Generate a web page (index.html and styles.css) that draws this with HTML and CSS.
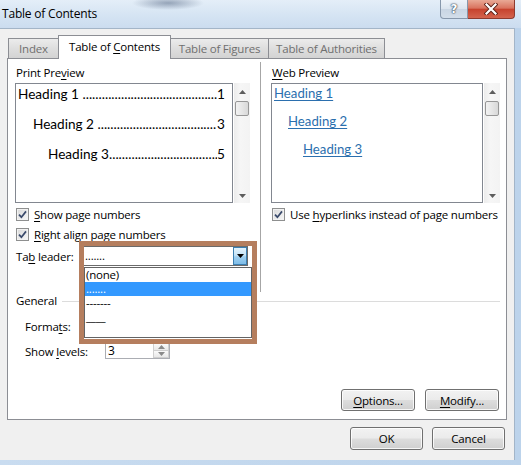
FILE: index.html
```html
<!DOCTYPE html>
<html lang="en">
<head>
<meta charset="utf-8">
<title>Table of Contents</title>
<link rel="stylesheet" href="styles.css">
</head>
<body>
<div class="window">
  <header class="titlebar">
    <span class="title">Table of Contents</span>
    <div class="caption-buttons">
      <span class="cap-btn help">?</span>
      <span class="cap-btn close">
        <svg viewBox="0 0 14 12" width="14" height="12"><path d="M2.5 1.5 11.5 10.5M11.5 1.5 2.5 10.5" stroke="#5a1f16" stroke-width="4" stroke-linecap="square"/><path d="M2.5 1.5 11.5 10.5M11.5 1.5 2.5 10.5" stroke="#fff" stroke-width="2.2" stroke-linecap="square"/></svg>
      </span>
    </div>
  </header>

  <div class="client">
    <nav class="tabs">
      <span class="tab t-index"><span>Index</span></span>
      <span class="tab active t-toc"><span>Table of <u>C</u>ontents</span></span>
      <span class="tab t-fig"><span>Table of Figures</span></span>
      <span class="tab t-auth"><span>Table of Authorities</span></span>
    </nav>

    <section class="panel">
      <div class="previews">
        <div class="pane pane-print">
          <div class="caption">Print Pre<u>v</u>iew</div>
          <div class="preview-box print-box">
            <div class="preview">
              <div class="toc-line lvl1"><span class="entry">Heading 1&nbsp;</span><span class="leader">..........................................</span><span class="num">1</span></div>
              <div class="toc-line lvl2"><span class="entry">Heading 2&nbsp;</span><span class="leader">.....................................</span><span class="num">3</span></div>
              <div class="toc-line lvl3"><span class="entry">Heading 3</span><span class="leader">..................................</span><span class="num">5</span></div>
            </div>
            <div class="vscroll">
              <svg class="arrow up" viewBox="0 0 7 4" width="7" height="4"><path d="M0 4 3.5 0 7 4Z" fill="#5d5d5d"/></svg>
              <span class="thumb"></span>
              <svg class="arrow down" viewBox="0 0 7 4" width="7" height="4"><path d="M0 0 3.5 4 7 0Z" fill="#5d5d5d"/></svg>
            </div>
          </div>
          <label class="check first">
            <span class="cb"><svg viewBox="0 0 9 9" width="9" height="9"><path d="M1 4.6 3.4 7.2 8 1.4" fill="none" stroke="#3a4a6b" stroke-width="1.7"/></svg></span>
            <span><u>S</u>how page numbers</span>
          </label>
          <label class="check">
            <span class="cb"><svg viewBox="0 0 9 9" width="9" height="9"><path d="M1 4.6 3.4 7.2 8 1.4" fill="none" stroke="#3a4a6b" stroke-width="1.7"/></svg></span>
            <span><u>R</u>ight align page numbers</span>
          </label>
          <div class="field leader-field">
            <span class="field-label short">Ta<u>b</u> leader:</span>
            <div class="combo">
              <span class="combo-value">.......</span>
              <span class="combo-arrow">
                <svg viewBox="0 0 7 4" width="7" height="4"><path d="M0 0 3.5 4 7 0Z" fill="#000"/></svg>
              </span>
              <ul class="dropdown">
                <li>(none)</li>
                <li class="selected">.......</li>
                <li>-------</li>
                <li>____</li>
              </ul>
              <span class="callout"></span>
            </div>
          </div>
        </div>

        <div class="divider"></div>

        <div class="pane pane-web">
          <div class="caption"><u>W</u>eb Preview</div>
          <div class="preview-box web-box">
            <div class="preview">
              <div class="web-line lvl1"><a>Heading 1</a></div>
              <div class="web-line lvl2"><a>Heading 2</a></div>
              <div class="web-line lvl3"><a>Heading 3</a></div>
            </div>
            <div class="vscroll">
              <svg class="arrow up" viewBox="0 0 7 4" width="7" height="4"><path d="M0 4 3.5 0 7 4Z" fill="#5d5d5d"/></svg>
              <span class="thumb"></span>
              <svg class="arrow down" viewBox="0 0 7 4" width="7" height="4"><path d="M0 0 3.5 4 7 0Z" fill="#5d5d5d"/></svg>
            </div>
          </div>
          <label class="check first">
            <span class="cb"><svg viewBox="0 0 9 9" width="9" height="9"><path d="M1 4.6 3.4 7.2 8 1.4" fill="none" stroke="#3a4a6b" stroke-width="1.7"/></svg></span>
            <span>Use <u>h</u>yperlinks instead of page numbers</span>
          </label>
        </div>
      </div>

      <div class="group">General</div>
      <div class="field indent formats">
        <span class="field-label">Forma<u>t</u>s:</span>
      </div>
      <div class="field indent levels">
        <span class="field-label">Show <u>l</u>evels:</span>
        <div class="spinner">
          <span class="spin-value">3</span>
          <span class="spin-buttons">
            <span class="spin up"><svg viewBox="0 0 7 4" width="7" height="4"><path d="M0 4 3.5 0 7 4Z" fill="#8a8a8a"/></svg></span>
            <span class="spin down"><svg viewBox="0 0 7 4" width="7" height="4"><path d="M0 0 3.5 4 7 0Z" fill="#8a8a8a"/></svg></span>
          </span>
        </div>
      </div>

      <div class="panel-actions">
        <button class="btn"><u>O</u>ptions...</button>
        <button class="btn"><u>M</u>odify...</button>
      </div>
    </section>

    <footer class="dialog-actions">
      <button class="btn">OK</button>
      <button class="btn">Cancel</button>
    </footer>
  </div>
</div>
</body>
</html>
```

FILE: styles.css
```css
html, body {
  margin: 0;
  padding: 0;
}

body {
  width: 521px;
  height: 465px;
  overflow: hidden;
  font-family: "Open Sans", "Noto Sans", sans-serif;
  font-size: 11.5px;
  letter-spacing: -0.2px;
  color: #000;
}

u {
  text-decoration: underline;
  text-underline-offset: 2px;
}

/* ---------- window frame ---------- */
.window {
  width: 521px;
  height: 465px;
  display: flex;
  flex-direction: column;
  background: linear-gradient(90deg, #c9dcf0 0%, #bcd3eb 100%);
}

.titlebar {
  height: 28px;
  flex: none;
  display: flex;
  align-items: flex-start;
  background:
    radial-gradient(ellipse 36px 7px at 168px 3px, rgba(86, 104, 132, 0.55), rgba(86, 104, 132, 0) 100%),
    linear-gradient(180deg, #e4eef8 0%, #d5e4f3 55%, #cbdcef 100%);
}

.title {
  padding: 6px 0 0 2px;
  line-height: 16px;
  font-size: 12px;
  color: #000;
}

.caption-buttons {
  margin-left: auto;
  margin-right: 6px;
  display: flex;
}

.cap-btn {
  height: 19px;
  box-sizing: border-box;
  display: flex;
  align-items: center;
  justify-content: center;
}

.help {
  width: 28px;
  border: 1px solid #8797ab;
  border-top: none;
  border-radius: 0 0 0 4px;
  background: linear-gradient(180deg, #eef3f9 0%, #dbe4ee 50%, #c9d5e3 51%, #d3deea 100%);
  color: #fff;
  font-family: "DejaVu Sans", sans-serif;
  font-weight: bold;
  font-size: 12px;
  text-shadow: 0 0 1px #3c4a5c, 0 0 1px #3c4a5c, 0 0 2px #3c4a5c;
}

.close {
  width: 47px;
  border: 1px solid #8e3b2f;
  border-top: none;
  border-left: none;
  border-radius: 0 0 4px 0;
  background: linear-gradient(180deg, #e9a996 0%, #d9735f 45%, #c7432e 52%, #d4644e 100%);
}

/* ---------- dialog client area ---------- */
.client {
  flex: 1;
  margin: 0 6px 5px 0;
  background: #f0f0f0;
  border-top: 1px solid #a3b5c8;
  border-right: 1px solid #a3b5c8;
  padding: 6px 7px 0 7px;
  display: flex;
  flex-direction: column;
}

.tabs {
  height: 24px;
  display: flex;
  align-items: flex-end;
  margin: 0 0 -1px 1px;
  position: relative;
  z-index: 2;
}

.tab {
  height: 20px;
  margin-bottom: 1px;
  margin-right: -1px;
  box-sizing: border-box;
  border: 1px solid #8c8e94;
  border-bottom: none;
  background: linear-gradient(180deg, #ececec 0%, #dedede 50%, #d3d3d3 100%);
  color: #6f6f6f;
  display: flex;
  align-items: center;
  justify-content: center;
  white-space: nowrap;
}

.tab.active {
  height: 24px;
  margin-bottom: 0;
  padding-bottom: 2px;
  background: #fff;
  color: #000;
  position: relative;
  z-index: 1;
}

.t-index { width: 51px; }
.t-toc { width: 113px; }
.t-fig { width: 99px; }
.t-auth { width: 117px; }

.panel {
  position: relative;
  z-index: 1;
  height: 362px;
  box-sizing: border-box;
  background: #fff;
  border: 1px solid #8c8e94;
  padding: 0 6px 0 0;
  display: flex;
  flex-direction: column;
}

/* ---------- preview columns ---------- */
.previews {
  height: 233px;
  display: grid;
  grid-template-columns: 252px 1px 1fr;
}

.pane {
  padding-top: 6px;
}

.pane-print {
  padding-left: 7px;
}

.pane-web {
  padding-left: 10px;
}

.divider {
  margin-top: 3px;
  background: #a6a6a6;
}

.caption {
  line-height: 16px;
  padding-left: 1px;
}

.preview-box {
  margin-top: 2px;
  height: 120px;
  display: flex;
  gap: 1px;
}

.print-box { width: 235px; }
.web-box { width: 229px; }

.preview {
  flex: 1;
  min-width: 0;
  box-sizing: border-box;
  border: 1px solid #828790;
  background: #fff;
  font-family: "Lato", sans-serif;
  font-size: 13.6px;
  letter-spacing: 0;
}

.print-box .preview {
  padding: 0 7px 0 2px;
}

.toc-line {
  display: flex;
  height: 20px;
  line-height: 20px;
  margin-bottom: 10px;
  white-space: nowrap;
}

.toc-line .leader {
  flex: 0 1 auto;
  overflow: hidden;
  min-width: 0;
}

.toc-line .num {
  margin-left: auto;
}

.toc-line.lvl2 { padding-left: 15px; }
.toc-line.lvl3 { padding-left: 30px; }

.web-box .preview {
  padding: 0 0 0 2px;
  font-size: 13.2px;
}

.web-line {
  height: 20px;
  line-height: 20px;
  margin-bottom: 8px;
}

.web-line:first-child { margin-top: -1px; }
.web-line.lvl2 { padding-left: 14px; }
.web-line.lvl3 { padding-left: 29px; }

.web-line a {
  color: #2b6fae;
  text-decoration: underline;
  text-underline-offset: 2px;
}

.vscroll {
  width: 16px;
  flex: none;
  position: relative;
  background: linear-gradient(90deg, #ececec 0%, #f6f6f6 40%, #f3f3f3 100%);
}

.vscroll .arrow {
  position: absolute;
  left: 5px;
}

.vscroll .arrow.up { top: 7px; }
.vscroll .arrow.down { bottom: 5px; }

.vscroll .thumb {
  position: absolute;
  left: 1px;
  top: 18px;
  width: 14px;
  height: 15px;
  box-sizing: border-box;
  border: 1px solid #979797;
  border-radius: 2px;
  background: linear-gradient(90deg, #f2f2f2 0%, #e6e6e6 50%, #d8d8d8 100%);
}

/* ---------- checkboxes ---------- */
.check {
  height: 20px;
  display: flex;
  align-items: center;
  gap: 5px;
  padding-left: 1px;
  white-space: nowrap;
}

.check.first { margin-top: 1px; }

.cb {
  width: 13px;
  height: 13px;
  flex: none;
  box-sizing: border-box;
  border: 1px solid #8e8f8f;
  background: linear-gradient(135deg, #d9d9d9 0%, #f7f7f7 100%);
  box-shadow: inset 0 0 0 1px #f2f2f2;
  display: flex;
  align-items: center;
  justify-content: center;
}

/* ---------- labelled fields ---------- */
.field {
  height: 20px;
  display: flex;
  align-items: center;
}

.leader-field {
  margin-top: 2px;
  padding-left: 1px;
}

.field-label {
  width: 80px;
  flex: none;
  white-space: nowrap;
}

.field-label.short { width: 66px; }

.combo {
  position: relative;
  width: 166px;
  height: 20px;
  box-sizing: border-box;
  border: 1px solid #6b6b6b;
  background: #fff;
  display: flex;
  align-items: center;
}

.combo-value {
  padding-left: 2px;
  line-height: 16px;
}

.combo-arrow {
  margin-left: auto;
  width: 14px;
  height: 18px;
  box-sizing: border-box;
  border: 1px solid #3c7fb1;
  background: linear-gradient(180deg, #e4f3fc 0%, #c4e3f7 45%, #9fd0f1 55%, #7fbde8 100%);
  display: flex;
  align-items: center;
  justify-content: center;
}

.dropdown {
  position: absolute;
  left: 1px;
  top: 20px;
  width: 168px;
  height: 71px;
  margin: 0;
  padding: 0;
  list-style: none;
  box-sizing: border-box;
  border: 1px solid #646464;
  background: #fff;
  z-index: 3;
}

.dropdown li {
  height: 14px;
  line-height: 14px;
  padding-left: 1px;
}

.dropdown li.selected {
  background: #3399ff;
  color: #fff;
}

/* highlight drawn around the open tab-leader list */
.callout {
  position: absolute;
  left: -4px;
  top: -6px;
  width: 178px;
  height: 103px;
  box-sizing: border-box;
  border: 5px solid #b57e5e;
  z-index: 4;
  pointer-events: none;
}

/* ---------- general group ---------- */
.group {
  margin-top: 1px;
  height: 16px;
  line-height: 16px;
  padding-left: 8px;
  display: flex;
  align-items: center;
  gap: 5px;
}

.group::after {
  content: "";
  flex: 1;
  height: 1px;
  background: #dcdcdc;
}

.indent {
  padding-left: 17px;
}

.formats { margin-top: 7px; }

.levels {
  margin-top: 6px;
  height: 18px;
}

.spinner {
  width: 65px;
  height: 17px;
  box-sizing: border-box;
  border: 1px solid #abadb3;
  border-top-color: #a3a6ad;
  display: flex;
  align-self: flex-start;
}

.spin-value {
  flex: 1;
  padding-left: 2px;
  line-height: 15px;
  font-size: 12px;
}

.spin-buttons {
  width: 16px;
  display: flex;
  flex-direction: column;
}

.spin {
  flex: 1;
  box-sizing: border-box;
  border: 1px solid #cfcfcf;
  background: linear-gradient(180deg, #fafafa 0%, #e8e8e8 100%);
  display: flex;
  align-items: center;
  justify-content: center;
}

.spin.down { border-top: none; }

/* ---------- buttons ---------- */
.btn {
  height: 22px;
  box-sizing: border-box;
  border: 1px solid #707070;
  border-radius: 3px;
  background: linear-gradient(180deg, #f2f2f2 0%, #ebebeb 48%, #dddddd 52%, #cfcfcf 100%);
  box-shadow: inset 0 0 0 1px rgba(255, 255, 255, 0.8);
  font-family: inherit;
  font-size: inherit;
  letter-spacing: inherit;
  color: #000;
  padding: 0;
}

.panel-actions {
  margin-top: 29px;
  padding-right: 1px;
  display: flex;
  justify-content: flex-end;
  gap: 10px;
}

.panel-actions .btn { width: 74px; }

.dialog-actions {
  margin-top: 7px;
  padding-right: 2px;
  display: flex;
  justify-content: flex-end;
  gap: 9px;
}

.dialog-actions .btn {
  width: 73px;
  height: 23px;
}
```
